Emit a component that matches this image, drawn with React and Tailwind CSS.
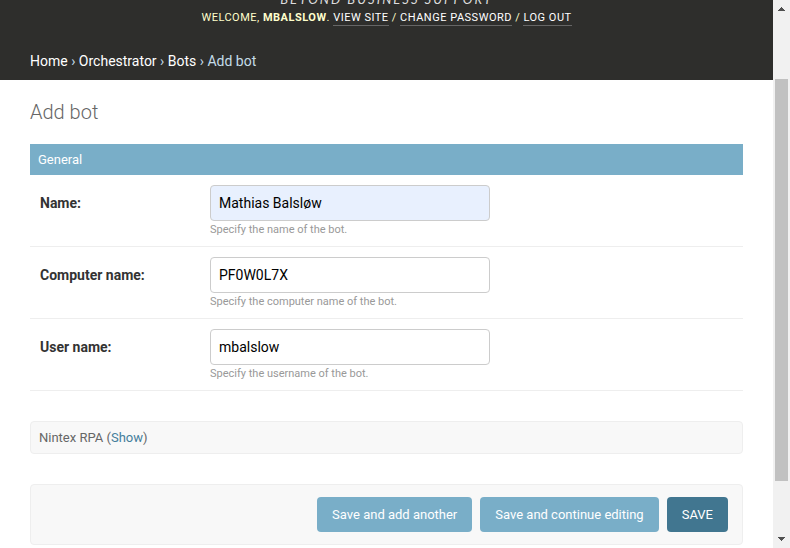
const fields = [
  { id: "name", label: "Name:", value: "Mathias Balsløw", help: "Specify the name of the bot.", tint: "bg-[#e8f0fe]" },
  { id: "computer", label: "Computer name:", value: "PF0W0L7X", help: "Specify the computer name of the bot.", tint: "bg-white" },
  { id: "user", label: "User name:", value: "mbalslow", help: "Specify the username of the bot.", tint: "bg-white" },
];

function Header() {
  return (
    <header className="overflow-hidden bg-[#2e2e2c] text-white">
      <p className="-mt-[10px] text-center font-['Lato','Liberation_Sans',sans-serif] text-[13px] leading-[18px] tracking-[2px] text-[#ddd] uppercase italic">
        Beyond business support
      </p>
      <div className="text-center text-[11px] leading-[19px] tracking-[0.5px] text-[#ffc] uppercase">
        Welcome, <strong className="font-bold">mbalslow</strong>.{" "}
        <a href="#site" className="border-b border-[#666] pb-px text-white">View site</a>
        {" / "}
        <a href="#password" className="border-b border-[#666] pb-px text-white">Change password</a>
        {" / "}
        <a href="#logout" className="border-b border-[#666] pb-px text-white">Log out</a>
      </div>
      <nav className="px-[30px] pt-[26px] pb-[11px] text-sm leading-4 text-[#c4dce8]">
        <a href="#home" className="text-white">Home</a>
        {" › "}
        <a href="#orchestrator" className="text-white">Orchestrator</a>
        {" › "}
        <a href="#bots" className="text-white">Bots</a>
        {" › "}Add bot
      </nav>
    </header>
  );
}

function Field({ id, label, value, help, tint }) {
  return (
    <div className="flex border-b border-[#eee] p-[10px]">
      <label htmlFor={id} className="w-[170px] shrink-0 pt-[10px] text-sm leading-4 font-bold text-[#333]">
        {label}
      </label>
      <div>
        <input
          id={id}
          type="text"
          defaultValue={value}
          className={"block h-9 w-[280px] rounded border border-[#ccc] px-2 text-sm text-black " + tint}
        />
        <p className="pt-[2px] text-[11px] leading-[13px] text-[#999]">{help}</p>
      </div>
    </div>
  );
}

function Scrollbar() {
  return (
    <div aria-hidden="true" className="flex w-[17px] shrink-0 flex-col bg-[#f1f1f1]">
      <svg viewBox="0 0 17 17" className="h-[17px] w-[17px]" shapeRendering="crispEdges">
        <path d="M8 7h1v1h1v1h1v1h1v1H5v-1h1V9h1V8h1z" fill="#505050" />
      </svg>
      <div className="h-[62px]" />
      <div className="mx-[2px] h-[402px] bg-[#c1c1c1]" />
      <div className="flex-1" />
      <svg viewBox="0 0 17 17" className="h-[17px] w-[17px]" shapeRendering="crispEdges">
        <path d="M5 6h7v1h-1v1h-1v1H9v1H8V9H7V8H6V7H5z" fill="#505050" />
      </svg>
    </div>
  );
}

export default function App() {
  return (
    <div className="flex h-screen overflow-hidden bg-white font-['Roboto','Liberation_Sans',sans-serif]">
      <div className="min-w-0 flex-1 overflow-hidden">
        <Header />
        <main className="px-[30px] pt-5">
          <h1 className="mb-5 text-xl leading-6 font-light text-[#666]">Add bot</h1>
          <form>
            <h2 className="bg-[#79aec8] p-2 text-[13px] leading-[15px] text-white">General</h2>
            {fields.map((field) => (
              <Field key={field.id} {...field} />
            ))}
            <h2 className="mt-[30px] rounded border border-[#eee] bg-[#f8f8f8] p-2 text-[13px] leading-[15px] text-[#666]">
              Nintex RPA (<a href="#show" className="text-[#447e9b]">Show</a>)
            </h2>
            <div className="mt-[30px] flex justify-end gap-2 rounded border border-[#eee] bg-[#f8f8f8] px-[14px] py-3 text-[13px] leading-[15px] text-white">
              <button type="button" className="rounded bg-[#79aec8] px-[15px] py-[10px]">Save and add another</button>
              <button type="button" className="rounded bg-[#79aec8] px-[15px] py-[10px]">Save and continue editing</button>
              <button type="button" className="rounded bg-[#417690] px-[15px] py-[10px]">SAVE</button>
            </div>
          </form>
        </main>
      </div>
      <Scrollbar />
    </div>
  );
}
